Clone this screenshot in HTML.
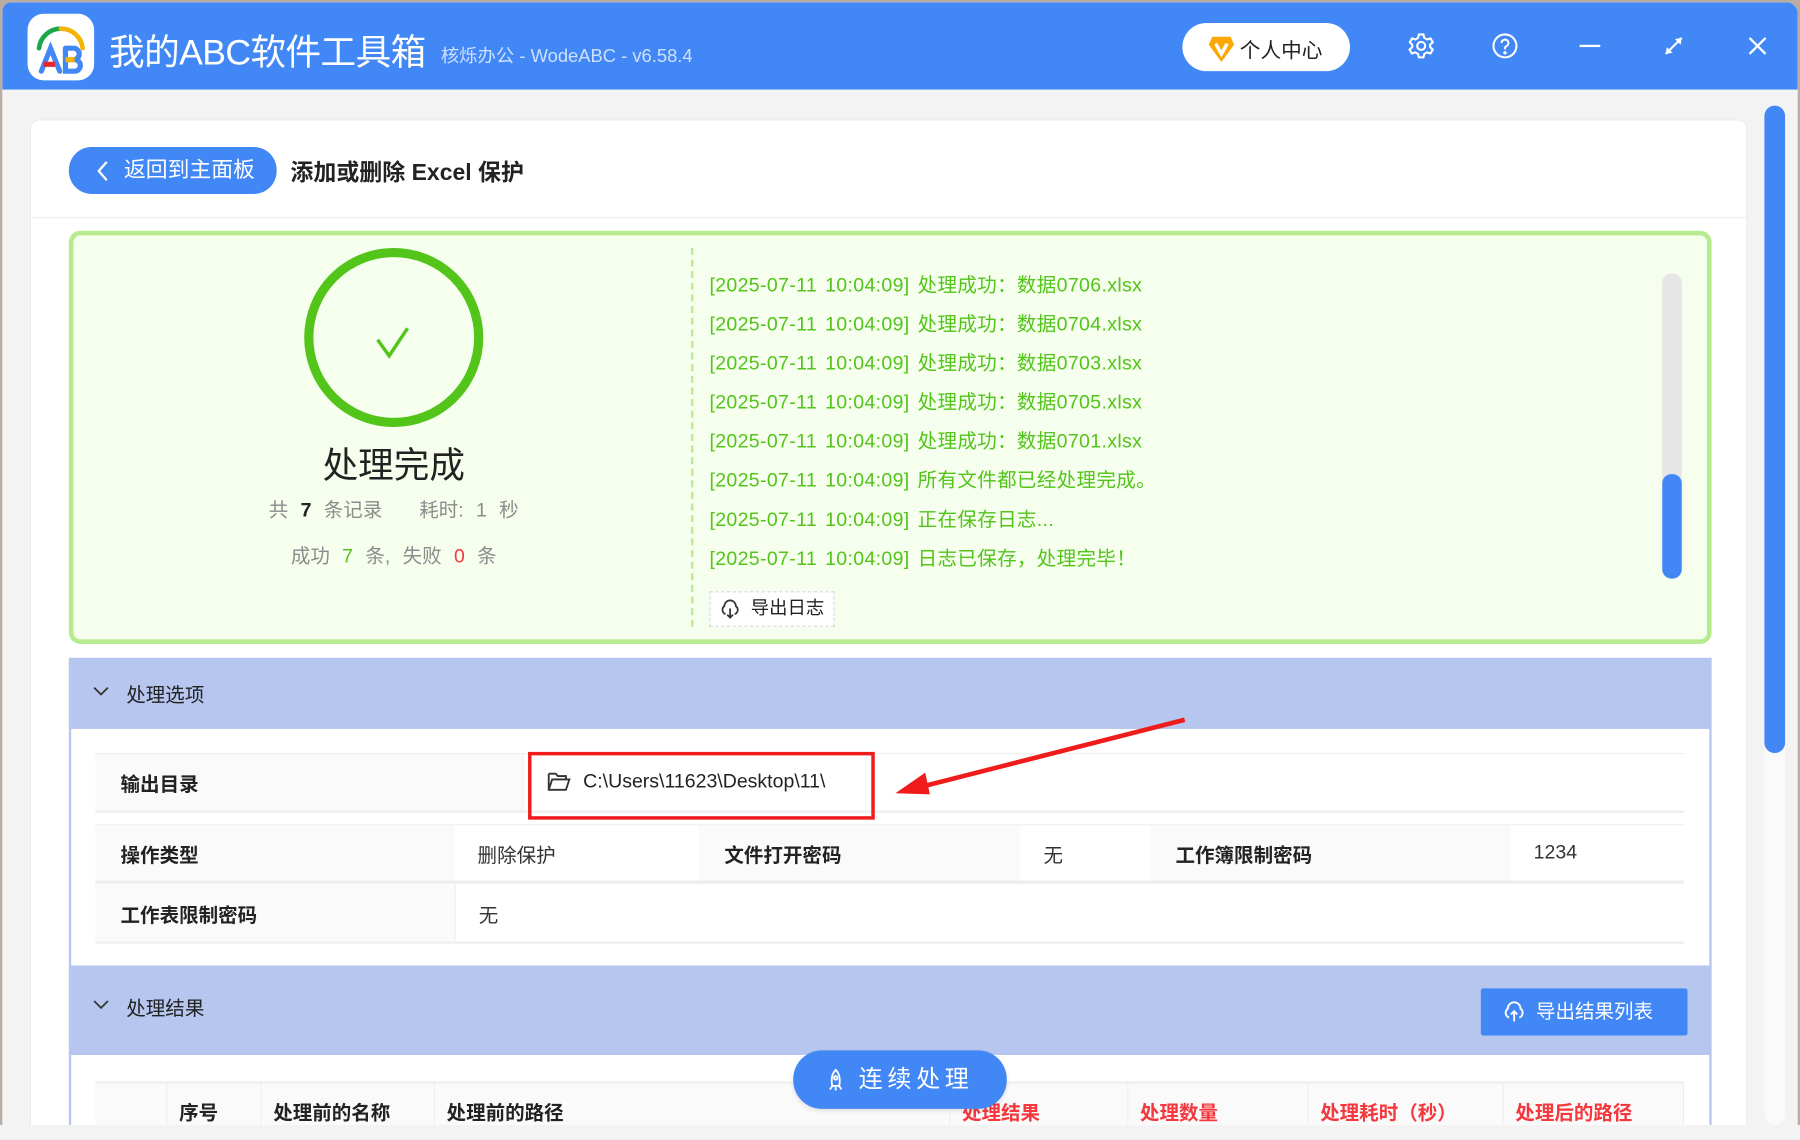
<!DOCTYPE html>
<html><head><meta charset="utf-8"><style>
*{margin:0;padding:0;box-sizing:border-box}
html,body{width:1800px;height:1140px;overflow:hidden;background:#b9aca3}
body{font-family:"Liberation Sans","Noto Sans CJK SC",sans-serif}
#s{position:absolute;left:0;top:0;width:1568px;height:993px;transform:scale(1.14796);transform-origin:0 0}
.a{position:absolute}
.win{left:2px;top:2px;width:1564px;height:990px;background:#f3f3f3;border-radius:8px 10px 8px 8px;overflow:hidden}
.hdr{left:0;top:0;width:1564px;height:76px;background:#4187f5}
.t{color:#fff;font-size:31px;left:93px;top:18px;letter-spacing:-.5px}
.st{color:#cfe0ff;font-size:16px;left:382px;top:33px}
.card{left:24px;top:102px;width:1496px;height:900px;background:#fff;border-radius:8px;border:1px solid #ececec}
.g{color:#52c41a;font-size:17px;left:618px;letter-spacing:.3px;word-spacing:2px}
.lbl{background:#fafafa;font-weight:bold;font-size:17px;color:#222;padding-left:22px;display:flex;align-items:center}
.val{font-size:17px;color:#333;padding-left:20px;display:flex;align-items:center;background:#fff}
.th{font-weight:bold;font-size:17px;color:#222;display:flex;align-items:flex-end;padding-bottom:0;padding-left:10px;background:#fafafa;border-right:1px solid #eee}
.red{color:#f5383d}
</style></head><body><div id="s">
<div class="a win">
 <div class="a hdr"></div>
 <div class="a" style="left:22px;top:10px;width:58px;height:58px;background:#fff;border-radius:14px">
  <svg width="58" height="58" viewBox="0 0 58 58"><path d="M10 30 A19 19 0 0 1 29 13" stroke="#1aa64a" stroke-width="4" fill="none" stroke-linecap="round"/><path d="M29 13 A19 19 0 0 1 48 30" stroke="#f5b400" stroke-width="4" fill="none" stroke-linecap="round"/><path d="M12 50 L20 30 L28 50" stroke="#4187f5" stroke-width="4.5" fill="none" stroke-linecap="round"/><path d="M14 44 L24 44" stroke="#e8262b" stroke-width="4.5"/><path d="M33 30 L33 50 L41 50 A5 5 0 0 0 41 40 L33 40 M33 30 L40 30 A5 5 0 0 1 40 40" stroke="#4187f5" stroke-width="4.5" fill="none" stroke-linecap="round"/><path d="M33 40 L41 40" stroke="#f5b400" stroke-width="4.5"/></svg>
 </div>
 <div class="a t">我的ABC软件工具箱</div>
 <div class="a st">核烁办公 - WodeABC - v6.58.4</div>
 <div class="a" style="left:1028px;top:18px;width:146px;height:42px;background:#fff;border-radius:21px"></div>
 <svg class="a" style="left:1050px;top:28px" width="24" height="26" viewBox="0 0 24 26"><path d="M4 2 H20 L23 9 L12 24 L1 9Z" fill="#f9a806"/><path d="M7 8 L12 17 L17 8" stroke="#fff" stroke-width="3" fill="none"/></svg>
 <div class="a" style="left:1078px;top:28px;font-size:18px;color:#222">个人中心</div>
 <svg class="a" style="left:1224px;top:26px" width="24" height="24" viewBox="0 0 24 24" fill="none" stroke="#fff" stroke-width="1.8"><circle cx="12" cy="12" r="3.5"/><path d="M10 2h4l.7 3 2.5 1.4 2.9-1 2 3.4-2.3 2.1v2.2l2.3 2.1-2 3.4-2.9-1-2.5 1.4-.7 3h-4l-.7-3-2.5-1.4-2.9 1-2-3.4 2.3-2.1v-2.2L2.1 8.8l2-3.4 2.9 1L9.3 5z"/></svg>
 <svg class="a" style="left:1297px;top:26px" width="24" height="24" viewBox="0 0 24 24" fill="none" stroke="#fff" stroke-width="1.8"><circle cx="12" cy="12" r="10"/><path d="M9 9.5a3 3 0 1 1 4 2.8c-.8.4-1 1-1 2v.7"/><circle cx="12" cy="18" r=".6" fill="#fff"/></svg>
 <div class="a" style="left:1374px;top:37px;width:18px;height:2px;background:#fff"></div>
 <svg class="a" style="left:1446px;top:28px" width="20" height="20" viewBox="0 0 20 20" stroke="#fff" stroke-width="1.8" fill="#fff"><path d="M3 17 L17 3"/><path d="M17 3 L11 4 L16 9Z" stroke="none"/><path d="M3 17 L9 16 L4 11Z" stroke="none"/></svg>
 <svg class="a" style="left:1519px;top:28px" width="20" height="20" viewBox="0 0 20 20" stroke="#fff" stroke-width="2"><path d="M3 3 L17 17 M17 3 L3 17"/></svg>
 <div class="a card"></div>
 <div class="a" style="left:1535px;top:90px;width:18px;height:888px;background:#fafafa;border-radius:9px"></div>
 <div class="a" style="left:1535px;top:90px;width:18px;height:564px;background:#4187f5;border-radius:9px"></div>
 <div class="a" style="left:0;top:978px;width:1564px;height:14px;background:#f3f3f3"></div>
</div>
<div class="a" style="left:60px;top:128px;width:181px;height:41px;background:#4187f5;border-radius:20px;color:#fff;font-size:19px;line-height:41px;padding-left:48px">返回到主面板</div>
<svg class="a" style="left:83px;top:139px" width="12" height="20" viewBox="0 0 12 20"><path d="M10 2 L3 10 L10 18" stroke="#fff" stroke-width="2" fill="none"/></svg>
<div class="a" style="left:253px;top:134px;font-size:20px;font-weight:bold;color:#222">添加或删除 Excel 保护</div>
<div class="a" style="left:28px;top:189px;width:1494px;height:1px;background:#eee"></div>
<div class="a" style="left:60px;top:201px;width:1431px;height:360px;background:#f6ffed;border:4px solid #b7eb8f;border-radius:10px"></div>
<svg class="a" style="left:262px;top:213px" width="162" height="162"><circle cx="81" cy="81" r="74" stroke="#52c41a" stroke-width="8" fill="none"/><path d="M67 83 L77 97 L93 73" stroke="#52c41a" stroke-width="3" fill="none"/></svg>
<div class="a" style="left:243px;top:380px;width:200px;text-align:center;font-size:31px;color:#222">处理完成</div>
<div class="a" style="left:193px;top:430px;width:300px;text-align:center;font-size:17px;color:#8c8c8c;word-spacing:6px">共 <b style="color:#222">7</b> 条记录 &nbsp; 耗时: 1 秒</div>
<div class="a" style="left:193px;top:470px;width:300px;text-align:center;font-size:17px;color:#8c8c8c;word-spacing:6px">成功 <span style="color:#52c41a">7</span> 条, 失败 <span class="red">0</span> 条</div>
<div class="a" style="left:602px;top:216px;width:0;height:330px;border-left:2px dashed #b7eb8f"></div>
<div class="a g" style="top:234px">[2025-07-11 10:04:09] 处理成功：数据0706.xlsx</div>
<div class="a g" style="top:268px">[2025-07-11 10:04:09] 处理成功：数据0704.xlsx</div>
<div class="a g" style="top:302px">[2025-07-11 10:04:09] 处理成功：数据0703.xlsx</div>
<div class="a g" style="top:336px">[2025-07-11 10:04:09] 处理成功：数据0705.xlsx</div>
<div class="a g" style="top:370px">[2025-07-11 10:04:09] 处理成功：数据0701.xlsx</div>
<div class="a g" style="top:404px">[2025-07-11 10:04:09] 所有文件都已经处理完成。</div>
<div class="a g" style="top:438px">[2025-07-11 10:04:09] 正在保存日志...</div>
<div class="a g" style="top:472px">[2025-07-11 10:04:09] 日志已保存，处理完毕！</div>
<div class="a" style="left:618px;top:515px;width:109px;height:31px;background:#fff;border:1px dashed #d9d9d9;font-size:16px;color:#222;line-height:29px;padding-left:35px">导出日志</div>
<svg class="a" style="left:627px;top:522px" width="18" height="18" viewBox="0 0 18 18" fill="none" stroke="#333" stroke-width="1.5"><path d="M5 13 A4 4 0 0 1 4 6 A5 5 0 0 1 14 6 A4 4 0 0 1 13 13"/><path d="M9 8 V16 M6.5 13.5 L9 16 L11.5 13.5"/></svg>
<div class="a" style="left:1448px;top:238px;width:17px;height:266px;background:#e6e6e6;border-radius:8px"></div>
<div class="a" style="left:1448px;top:413px;width:17px;height:91px;background:#4187f5;border-radius:8px"></div>
<div class="a" style="left:60px;top:573px;width:1431px;height:270px;border:2px solid #b6c6ee;border-top:none;background:#fff"></div>
<div class="a" style="left:60px;top:573px;width:1431px;height:62px;background:#b6c6ee"></div>
<svg class="a" style="left:80px;top:596px" width="16" height="12"><path d="M2 3 L8 9 L14 3" stroke="#333" stroke-width="1.5" fill="none"/></svg>
<div class="a" style="left:110px;top:591px;font-size:17px;color:#222">处理选项</div>
<div class="a" style="left:83px;top:656px;width:1384px;height:52px;border-top:1px solid #eee;border-bottom:2px solid #eee;display:flex"><div class="lbl" style="width:372px">输出目录</div><div class="val" style="flex:1;border-left:1px solid #eee"></div></div>
<div class="a" style="left:460px;top:655px;width:302px;height:59px;border:3px solid #f01b1b"></div>
<svg class="a" style="left:476px;top:672px" width="22" height="18" viewBox="0 0 22 18" fill="none" stroke="#333" stroke-width="1.6"><path d="M2 2 H8 L10 4 H17 V7 M2 2 V16 H17 L20 7 H5 L2 16"/></svg>
<div class="a" style="left:508px;top:671px;font-size:17px;color:#222">C:\Users\11623\Desktop\11\</div>
<svg class="a" style="left:770px;top:620px" width="270" height="80"><path d="M262 7 L30 66" stroke="#f01b1b" stroke-width="4"/><path d="M10 71 L36 53 L40 72Z" fill="#f01b1b"/></svg>
<div class="a" style="left:83px;top:718px;width:1384px;height:104px;border-top:1px solid #eee;border-bottom:2px solid #eee">
 <div style="display:flex;height:51px;border-bottom:3px solid #eee"><div class="lbl" style="width:313px">操作类型</div><div class="val" style="width:213px">删除保护</div><div class="lbl" style="width:280px">文件打开密码</div><div class="val" style="width:113px">无</div><div class="lbl" style="width:314px">工作簿限制密码</div><div class="val" style="flex:1">1234</div></div>
 <div style="display:flex;height:50px"><div class="lbl" style="width:313px">工作表限制密码</div><div class="val" style="flex:1;border-left:1px solid #eee">无</div></div>
</div>
<div class="a" style="left:60px;top:842px;width:1431px;height:140px;border:2px solid #b6c6ee;border-top:none;background:#fff"></div>
<div class="a" style="left:60px;top:842px;width:1431px;height:77px;background:#b6c6ee"></div>
<svg class="a" style="left:80px;top:869px" width="16" height="12"><path d="M2 3 L8 9 L14 3" stroke="#333" stroke-width="1.5" fill="none"/></svg>
<div class="a" style="left:110px;top:864px;font-size:17px;color:#222">处理结果</div>
<div class="a" style="left:1290px;top:861px;width:180px;height:41px;background:#4187f5;border-radius:2px;color:#fff;font-size:17px;line-height:41px;padding-left:48px">导出结果列表</div>
<svg class="a" style="left:1309px;top:872px" width="20" height="20" viewBox="0 0 18 18" fill="none" stroke="#fff" stroke-width="1.5"><path d="M5 13 A4 4 0 0 1 4 6 A5 5 0 0 1 14 6 A4 4 0 0 1 13 13"/><path d="M9 8 V16 M6.5 10.5 L9 8 L11.5 10.5"/></svg>
<div class="a" style="left:83px;top:942px;width:1384px;height:38px;border-top:2px solid #eee;display:flex;background:#fafafa">
 <div class="th" style="width:63px"></div><div class="th" style="width:82px">序号</div><div class="th" style="width:151px">处理前的名称</div><div class="th" style="width:449px">处理前的路径</div><div class="th red" style="width:155px">处理结果</div><div class="th red" style="width:157px">处理数量</div><div class="th red" style="width:170px">处理耗时（秒）</div><div class="th red" style="flex:1">处理后的路径</div>
</div>
<div class="a" style="left:0;top:980px;width:1568px;height:13px;background:#f3f3f3"></div>
<div class="a" style="left:691px;top:915px;width:186px;height:51px;background:#4187f5;border-radius:25px;color:#fff;font-size:21px;line-height:51px;padding-left:57px;letter-spacing:4px;box-shadow:0 2px 4px rgba(0,0,0,.1)">连续处理</div>
<svg class="a" style="left:719px;top:930px" width="18" height="22" viewBox="0 0 18 22" fill="none" stroke="#fff" stroke-width="1.6"><path d="M9 2 C13 6 13 12 12 16 H6 C5 12 5 6 9 2Z"/><circle cx="9" cy="9" r="1.5"/><path d="M6 16 L4 19 M12 16 L14 19 M9 17 V20"/></svg>
</div></body></html>
